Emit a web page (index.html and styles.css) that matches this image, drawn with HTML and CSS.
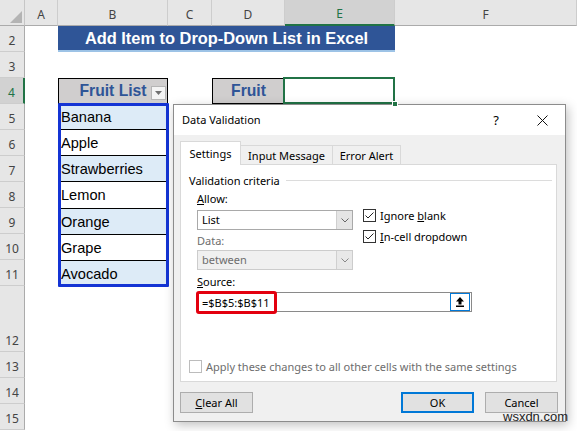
FILE: index.html
```html
<!DOCTYPE html>
<html lang="en">

<head>
    <meta charset="UTF-8" />
    <meta name="viewport" content="width=device-width, initial-scale=1.0" />
    <title>Add Item to Drop-Down List in Excel</title>
    <link rel="stylesheet" href="styles.css">
</head>

<body>
    <div class="screen">
        <div class="sheet">
            <div class="corner"></div>
            <div class="col_head">A</div>
            <div class="col_head">B</div>
            <div class="col_head">C</div>
            <div class="col_head">D</div>
            <div class="col_head sel">E</div>
            <div class="col_head">F</div>

            <div class="row_head">2</div>
            <div class="cell"></div>
            <div class="title_bx">Add Item to Drop-Down List in Excel</div>
            <div class="cell"></div>

            <div class="row_head">3</div>
            <div class="cell wide"></div>

            <div class="row_head sel">4</div>
            <div class="cell"></div>
            <div class="cell head_cell">Fruit List
                <span class="filter_btn">
                    <svg width="7" height="4" viewBox="0 0 7 4"><path d="M0 0 H7 L3.5 4 Z" fill="#707070" /></svg>
                </span>
            </div>
            <div class="cell"></div>
            <div class="cell head_cell">Fruit</div>
            <div class="cell active_cell"></div>
            <div class="cell"></div>

            <div class="row_head">5</div>
            <div class="cell"></div>
            <div class="fruit_list">
                <div class="fruit_item alt">Banana</div>
                <div class="fruit_item">Apple</div>
                <div class="fruit_item alt">Strawberries</div>
                <div class="fruit_item">Lemon</div>
                <div class="fruit_item alt">Orange</div>
                <div class="fruit_item">Grape</div>
                <div class="fruit_item alt">Avocado</div>
            </div>
            <div class="cell rest"></div>

            <div class="row_head">6</div>
            <div class="cell"></div>
            <div class="cell rest"></div>
            <div class="row_head">7</div>
            <div class="cell"></div>
            <div class="cell rest"></div>
            <div class="row_head">8</div>
            <div class="cell"></div>
            <div class="cell rest"></div>
            <div class="row_head">9</div>
            <div class="cell"></div>
            <div class="cell rest"></div>
            <div class="row_head">10</div>
            <div class="cell"></div>
            <div class="cell rest"></div>
            <div class="row_head">11</div>
            <div class="cell"></div>
            <div class="cell rest"></div>

            <div class="row_head">12</div>
            <div class="cell wide"></div>
            <div class="row_head">13</div>
            <div class="cell wide"></div>
            <div class="row_head">14</div>
            <div class="cell wide"></div>
            <div class="row_head">15</div>
            <div class="cell wide"></div>
        </div>

        <div class="dialog">
            <div class="dlg_title">
                <span class="dlg_name">Data Validation</span>
                <span class="title_btn help">?</span>
                <span class="title_btn">
                    <svg width="11" height="11" viewBox="0 0 11 11"><path d="M0.5 0.5 L10.5 10.5 M10.5 0.5 L0.5 10.5" stroke="#111" stroke-width="1" /></svg>
                </span>
            </div>

            <div class="tabs">
                <div class="tab active">Settings</div>
                <div class="tab">Input Message</div>
                <div class="tab">Error Alert</div>
            </div>

            <div class="tab_panel">
                <div class="criteria">
                    <span>Validation criteria</span>
                    <i class="sep"></i>
                </div>

                <div class="form">
                    <div class="form_top">
                        <div class="form_left">
                            <div class="lbl"><u>A</u>llow:</div>
                            <div class="combo">
                                <span class="combo_val">List</span>
                                <span class="combo_btn">
                                    <svg width="8" height="5" viewBox="0 0 8 5"><path d="M0.5 0.5 L4 4 L7.5 0.5" fill="none" stroke="#666" /></svg>
                                </span>
                            </div>
                            <div class="lbl off">Data:</div>
                            <div class="combo off">
                                <span class="combo_val">between</span>
                                <span class="combo_btn">
                                    <svg width="8" height="5" viewBox="0 0 8 5"><path d="M0.5 0.5 L4 4 L7.5 0.5" fill="none" stroke="#888" /></svg>
                                </span>
                            </div>
                        </div>
                        <div class="form_right">
                            <div class="check_row">
                                <span class="check">
                                    <svg width="11" height="11" viewBox="0 0 11 11"><path d="M1.5 5.5 L4 8 L9.5 2.5" fill="none" stroke="#222" /></svg>
                                </span>
                                Ignore&nbsp;<u>b</u>lank
                            </div>
                            <div class="check_row">
                                <span class="check">
                                    <svg width="11" height="11" viewBox="0 0 11 11"><path d="M1.5 5.5 L4 8 L9.5 2.5" fill="none" stroke="#222" /></svg>
                                </span>
                                <u>I</u>n-cell dropdown
                            </div>
                        </div>
                    </div>

                    <div class="lbl src_lbl"><u>S</u>ource:</div>
                    <div class="source">
                        <span class="source_val">=$B$5:$B$11</span>
                        <span class="ref_btn">
                            <svg width="8" height="10" viewBox="0 0 8 10"><path d="M4 0 L8 4.5 H5.5 V7.5 H2.5 V4.5 H0 Z" fill="#000" /><rect x="0" y="8.5" width="8" height="1.5" fill="#000" /></svg>
                        </span>
                        <span class="mark"></span>
                    </div>
                </div>

                <div class="check_row apply">
                    <span class="check off"></span>
                    Apply these changes to all other cells with the same settings
                </div>
            </div>

            <div class="dlg_foot">
                <span class="btn"><u>C</u>lear All</span>
                <span class="btn default">OK</span>
                <span class="btn">Cancel</span>
            </div>
        </div>

        <div class="watermark">wsxdn.com</div>
    </div>
</body>

</html>
```

FILE: styles.css
```css
*,
*::before,
*::after {
    box-sizing: border-box;
}

body {
    margin: 0;
    background: #fff;
    font-family: "Liberation Sans", Arial, sans-serif;
}

.screen {
    position: relative;
    width: 577px;
    height: 431px;
    overflow: hidden;
}

/* worksheet */
.sheet {
    display: grid;
    grid-template-columns: 25px 33px 110px 44px 73px 110px 1fr;
    grid-template-rows: repeat(11, 26px) 66px repeat(3, 26px);
    background: #fff;
}

.corner {
    position: relative;
    background: #e6e6e6;
    border-right: 1px solid #c6c6c6;
    border-bottom: 1px solid #ababab;
}

.corner::after {
    content: "";
    position: absolute;
    right: 2px;
    bottom: 2px;
    width: 12px;
    height: 12px;
    background: #b4b4b4;
    clip-path: polygon(100% 0, 100% 100%, 0 100%);
}

.col_head,
.row_head {
    display: flex;
    justify-content: center;
    background: #e6e6e6;
    color: #444;
    font-family: "Noto Sans", sans-serif;
    font-size: 12px;
}

.col_head {
    align-items: center;
    padding-top: 3px;
    border-right: 1px solid #cdcdcd;
    border-bottom: 1px solid #ababab;
}

.col_head.sel {
    background: #d2d2d2;
    color: #217346;
    border-bottom: 2px solid #217346;
}

.row_head {
    align-items: flex-end;
    padding-bottom: 2px;
    border-right: 1px solid #ababab;
    border-bottom: 1px solid #cdcdcd;
}

.row_head.sel {
    background: #d2d2d2;
    color: #217346;
    border-right: 2px solid #217346;
}

.wide {
    grid-column: span 6;
}

.rest {
    grid-column: span 4;
}

.title_bx {
    grid-column: span 4;
    display: flex;
    align-items: center;
    justify-content: center;
    padding-top: 1px;
    background: #2f5597;
    border-bottom: 2px solid #9dc3e6;
    color: #fff;
    font-weight: bold;
    font-size: 16.4px;
}

.head_cell {
    position: relative;
    display: flex;
    align-items: center;
    justify-content: center;
    background: #d0cece;
    border: 1px solid #000;
    color: #2f5597;
    font-weight: bold;
    font-size: 15.7px;
}

.filter_btn {
    position: absolute;
    right: 1px;
    bottom: 3px;
    width: 15px;
    height: 14px;
    display: flex;
    align-items: center;
    justify-content: center;
    background: #f4f4f4;
    border: 1px solid #b5b5b5;
}

.active_cell {
    position: relative;
}

.active_cell::after {
    content: "";
    position: absolute;
    top: -1px;
    left: -2px;
    right: 0;
    bottom: 0;
    border: 2px solid #217346;
}

.active_cell::before {
    content: "";
    position: absolute;
    right: -3px;
    bottom: -3px;
    width: 6px;
    height: 6px;
    background: #217346;
    border: 1px solid #fff;
    z-index: 1;
}

.fruit_list {
    grid-row: span 7;
    position: relative;
    display: flex;
    flex-direction: column;
}

.fruit_list::after {
    content: "";
    position: absolute;
    top: -1px;
    left: 0;
    right: -1px;
    bottom: -1px;
    border: 3px solid #1434d4;
    border-radius: 1px;
}

.fruit_item {
    flex: 1;
    display: flex;
    align-items: center;
    padding: 1px 0 0 3px;
    border-bottom: 1px solid #000;
    color: #000;
    font-size: 14.6px;
}

.fruit_item:last-child {
    border-bottom: none;
}

.fruit_item.alt {
    background: #ddebf7;
}

/* data validation dialog */
.dialog {
    position: absolute;
    left: 173px;
    top: 104px;
    width: 393px;
    height: 318px;
    display: flex;
    flex-direction: column;
    background: #f0f0f0;
    border: 1px solid #8c8c8c;
    box-shadow: 2px 3px 10px rgba(0, 0, 0, 0.25);
    font-family: "Noto Sans", "Open Sans", sans-serif;
    font-size: 11px;
    color: #000;
}

.dlg_title {
    height: 30px;
    display: flex;
    align-items: center;
    padding-left: 8px;
    background: #fff;
}

.dlg_name {
    flex: 1;
    padding-bottom: 1px;
}

.title_btn {
    width: 46px;
    height: 30px;
    display: flex;
    align-items: center;
    justify-content: center;
}

.title_btn.help {
    font-size: 13px;
}

.tabs {
    height: 29px;
    display: flex;
    align-items: flex-end;
    margin-left: 6px;
    position: relative;
    z-index: 1;
}

.tab {
    height: 19px;
    display: flex;
    align-items: center;
    justify-content: center;
    background: #f0f0f0;
    border: 1px solid #d9d9d9;
    border-left: none;
    border-bottom: none;
}

.tab:nth-child(2) {
    width: 92px;
}

.tab:nth-child(3) {
    width: 68px;
}

.tab.active {
    width: 61px;
    height: 24px;
    margin-bottom: -1px;
    padding-bottom: 1px;
    background: #fff;
    border-left: 1px solid #d9d9d9;
}

.tab_panel {
    height: 218px;
    margin: 0 8px 0 6px;
    display: flex;
    flex-direction: column;
    background: #fff;
    border: 1px solid #d9d9d9;
}

.criteria {
    height: 14px;
    margin-top: 8px;
    padding-left: 8px;
    display: flex;
    align-items: center;
}

.sep {
    flex: 1;
    height: 1px;
    margin: 1px 4px 0 6px;
    background: #dcdcdc;
}

.form {
    padding-left: 16px;
}

.form_top {
    display: flex;
}

.form_left {
    width: 156px;
    display: flex;
    flex-direction: column;
}

.form_right {
    margin-left: 10px;
    padding-top: 21px;
    display: flex;
    flex-direction: column;
    gap: 7px;
}

.lbl {
    height: 14px;
    line-height: 14px;
    margin-top: 5px;
}

.lbl.off {
    margin-top: 4px;
    color: #6d6d6d;
}

.combo {
    height: 20px;
    margin-top: 4px;
    display: flex;
    background: #fff;
    border: 1px solid #a9a9a9;
}

.combo.off {
    margin-top: 2px;
    background: #f0f0f0;
    border-color: #cccccc;
    color: #6d6d6d;
}

.combo_val {
    flex: 1;
    padding-left: 4px;
    line-height: 18px;
}

.combo_btn {
    width: 16px;
    display: flex;
    align-items: center;
    justify-content: center;
    background: #e5e5e5;
    border-left: 1px solid #cfcfcf;
}

.combo.off .combo_btn {
    background: #e8e8e8;
}

.check_row {
    height: 14px;
    display: flex;
    align-items: center;
    white-space: nowrap;
}

.check {
    width: 13px;
    height: 13px;
    margin-right: 4px;
    display: flex;
    align-items: center;
    justify-content: center;
    background: #fff;
    border: 1px solid #333;
}

.check.off {
    border-color: #bcbcbc;
}

.src_lbl {
    margin-top: 5px;
}

.source {
    position: relative;
    width: 275px;
    height: 20px;
    margin-top: 3px;
    display: flex;
    align-items: center;
    background: #fff;
    border: 1px solid #8a8a8a;
}

.source_val {
    flex: 1;
    padding-left: 4px;
}

.ref_btn {
    width: 20px;
    height: 18px;
    margin-right: 1px;
    display: flex;
    align-items: center;
    justify-content: center;
    background: #fff;
    border: 1px solid #0078d7;
}

.mark {
    position: absolute;
    left: -2px;
    top: -2px;
    width: 81px;
    height: 23px;
    border: 3px solid #e3000f;
    border-radius: 3px;
}

.apply {
    margin-top: auto;
    margin-bottom: 8px;
    padding-left: 8px;
    color: #6d6d6d;
}

.dlg_foot {
    margin: 10px 7px 0 6px;
    display: flex;
    gap: 11px;
}

.btn {
    width: 73px;
    height: 21px;
    display: flex;
    align-items: center;
    justify-content: center;
    background: #e1e1e1;
    border: 1px solid #adadad;
}

.btn:first-child {
    margin-right: auto;
}

.btn.default {
    border: 2px solid #0078d7;
}

.watermark {
    position: absolute;
    left: 503px;
    top: 409px;
    color: #1e1e1e;
    font-size: 13px;
}
```
